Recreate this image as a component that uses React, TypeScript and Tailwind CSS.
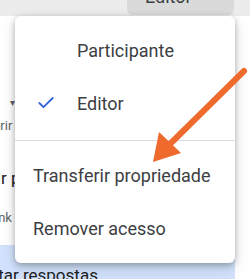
import { Check } from "lucide-react";

const font = { fontFamily: "Roboto, 'Noto Sans', sans-serif" };

const MenuItem = ({ label, checked }: { label: string; checked?: boolean }) => (
  <div className="flex h-[53px] items-center text-[18px] text-[#3c4043]">
    {checked !== undefined ? (
      <div className="flex w-[62px] shrink-0 items-center pl-[21px]">
        {checked && <Check className="h-[20px] w-[20px] text-[#3367d6]" strokeWidth={2.2} />}
      </div>
    ) : (
      <div className="w-[18px] shrink-0" />
    )}
    <span>{label}</span>
  </div>
);

export default function App() {
  return (
    <div className="relative h-[279px] w-[250px] overflow-hidden bg-white" style={font}>
      {/* page behind the menu */}
      <div className="flex h-[16px] bg-[#ececec]">
        <div className="ml-[127px] flex h-[15px] w-[107px] items-start overflow-hidden rounded-b-[6px] bg-[#dadada] pl-[18px]">
          <span className="-mt-[12px] whitespace-nowrap text-[18px] leading-[18px] text-[#3c4043]">Editor</span>
        </div>
      </div>
      <div className="flex w-[235px] flex-col">
        <div className="mt-[78px] flex h-[16px] items-center pl-[10px] text-[10px] text-[#5f6368]">▾</div>
        <div className="mt-[6px] -ml-[24px] whitespace-nowrap text-[13px] text-[#5f6368]">Inserir comentários</div>
        <div className="mt-[30px] -ml-[66px] whitespace-nowrap text-[17px] text-[#202124]">Transferir propriedade</div>
        <div className="mt-[17px] -ml-[12px] whitespace-nowrap text-[13px] text-[#5f6368]">Link para a planilha</div>
        <div className="mt-[17px] flex h-[40px] items-end bg-[#d3e3fd]">
          <span className="-ml-[35px] whitespace-nowrap text-[17px] leading-[20px] text-[#202124]">Aceitar respostas</span>
        </div>
      </div>

      {/* dropdown menu */}
      <div className="absolute left-[15px] top-[16px] flex h-[247px] w-[220px] flex-col rounded-[6px] bg-white py-[8px] shadow-[0_2px_6px_rgba(0,0,0,0.28),0_6px_16px_rgba(0,0,0,0.12)]">
        <MenuItem label="Participante" checked={false} />
        <MenuItem label="Editor" checked />
        <div className="mb-[9px] mt-[10px] h-px bg-[#dadce0]" />
        <MenuItem label="Transferir propriedade" />
        <MenuItem label="Remover acesso" />
      </div>

      {/* annotation arrow */}
      <svg className="pointer-events-none absolute inset-0" width="250" height="279" viewBox="0 0 250 279">
        <line x1="244" y1="71" x2="170" y2="144" stroke="#ee6b2d" strokeWidth="6" strokeLinecap="round" />
        <polygon points="153,162 159,132 181,153" fill="#ee6b2d" />
      </svg>
    </div>
  );
}
